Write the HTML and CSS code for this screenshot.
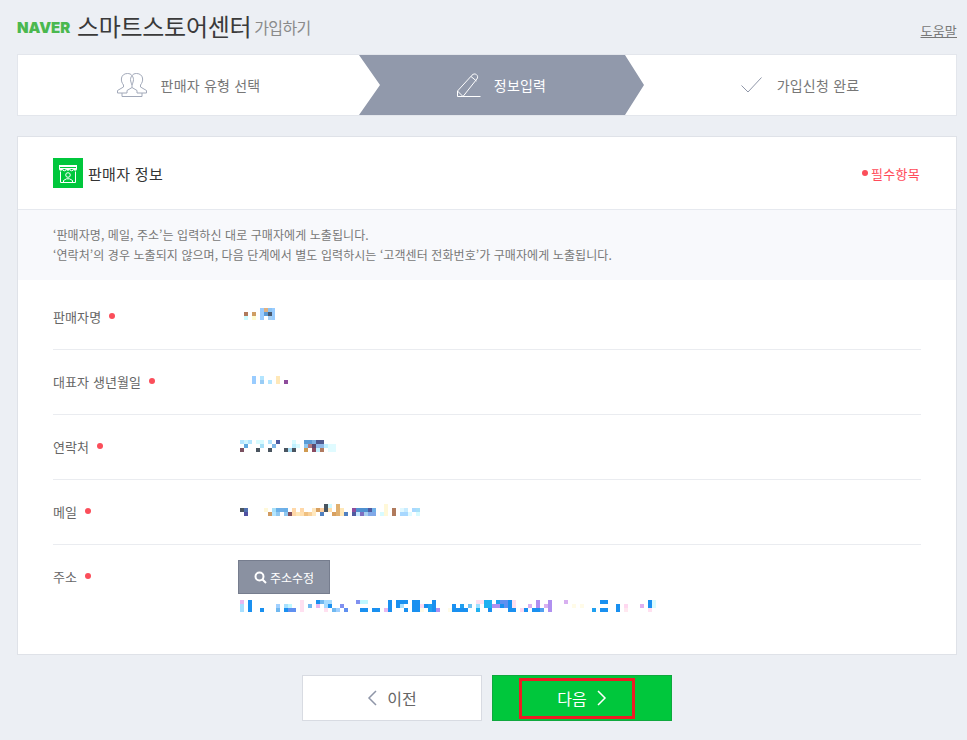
FILE: index.html
```html
<!DOCTYPE html>
<html lang="ko">
<head>
<meta charset="utf-8">
<title>스마트스토어센터 가입하기</title>
<link rel="stylesheet" href="styles.css">
</head>
<body>
<div class="page">
  <header class="top">
    <span class="naver">NAVER</span>
    <h1 class="title">스마트스토어센터</h1>
    <span class="sub">가입하기</span>
    <a class="help" href="#">도움말</a>
  </header>

  <ol class="steps">
    <li class="step step-first">
      <svg class="ico-people" width="30" height="24" viewBox="0 0 30 24" fill="none" stroke="#a2a9b9" stroke-width="1">
        <path d="M15 2.500C14 1.200 12.500.5 10.500.5 7 .5 5 2.500 4.500 5c-.5 3 .5 5 2 7v2L.5 17.500V20H5v3.500h20V20h4.500v-2.500l-6-3.500v-2c1.500-2 2.500-4 2-7C25 2.500 23 .5 19.500.5c-2 0-3.500.7-4.500 2z"/>
        <path d="M15 2.500c1.300 1.800 1.800 3.500 1.300 5.500-.3 1.500-.8 3-1.300 4-.5-1-1-2.500-1.300-4-.5-2 0-3.700 1.300-5.500zM15 12v2.500l-5 3v2.500H5M15 14.500l5 3v2.500h5"/>
      </svg>
      <span class="step-text">판매자 유형 선택</span>
    </li>
    <li class="step step-active">
      <svg class="ico-pencil" width="24" height="24" viewBox="0 0 24 24" fill="none" stroke="#fff" stroke-width="1">
        <path d="M.5 23.500v-5.500L15 2.200c1.300-1.400 3-1.700 4.400-.6 1.500 1.200 1.700 3 .4 4.500L6 23.500zM.5 18l5.500 5.500M14 3.500l5.500 4.500M6 23.500h17.500"/>
      </svg>
      <span class="step-text">정보입력</span>
    </li>
    <li class="step step-last">
      <svg class="ico-check" width="21" height="16" viewBox="0 0 21 16" fill="none" stroke="#8f96a8" stroke-width="1">
        <path d="M.5 8.500L7 15 20.500.5"/>
      </svg>
      <span class="step-text">가입신청 완료</span>
    </li>
  </ol>

  <main class="card">
    <div class="card-head">
      <span class="store-badge">
        <svg width="30" height="30" viewBox="0 0 30 30" fill="none" stroke="#fff" stroke-width="1">
          <path d="M6.500 7.500h17v3h-17z"/>
          <path fill="#fff" stroke="none" d="M6 7h18v2H6zM6 10h3.600v1a1.800 1.800 0 0 1-3.600 0zM13.200 10h3.600v1a1.800 1.800 0 0 1-3.600 0zM20.400 10H24v1a1.800 1.800 0 0 1-3.600 0z"/>
          <path d="M9.600 10.500v.5a1.800 1.800 0 0 0 3.600 0v-.5M16.800 10.500v.5a1.800 1.800 0 0 0 3.600 0v-.5"/>
          <path d="M7.500 13.500v11h15v-11"/>
          <circle cx="15" cy="17" r="2.300"/>
          <path d="M10.500 24.500v-2l3-1.700h3l3 1.700v2"/>
        </svg>
      </span>
      <h2 class="card-title">판매자 정보</h2>
      <span class="required"><i class="dot dot-tight"></i>필수항목</span>
    </div>

    <div class="notice">
      <p>‘판매자명, 메일, 주소’는 입력하신 대로 구매자에게 노출됩니다.</p>
      <p>‘연락처’의 경우 노출되지 않으며, 다음 단계에서 별도 입력하시는 ‘고객센터 전화번호’가 구매자에게 노출됩니다.</p>
    </div>

    <div class="rows">
      <div class="row row-first">
        <div class="label">판매자명<i class="dot"></i></div>
        <svg class="mosaic" width="36" height="12" viewBox="0 0 36 12" stroke-width="4" fill="none">
          <path stroke="#b07a5c" d="M4 6h4"/><path stroke="#cdfbff" d="M4 10h4"/>
          <path stroke="#cf9d62" d="M12 6h4"/><path stroke="#fffbd0" d="M12 10h4"/>
          <path stroke="#99ccff" d="M20 2h4M20 6h4M20 10h4M32 2h3M32 6h3M32 10h3"/>
          <path stroke="#e0b080" d="M24 2h4"/><path stroke="#5b9bd5" d="M24 6h4"/>
          <path stroke="#8cc4f5" d="M28 2h4"/><path stroke="#4a5a70" d="M28 6h4"/><path stroke="#a5d0f5" d="M28 10h4"/>
        </svg>
      </div>
      <div class="row row-birth">
        <div class="label">대표자 생년월일<i class="dot"></i></div>
        <svg class="mosaic" width="48" height="8" viewBox="0 0 48 8" stroke-width="4" fill="none">
          <path stroke="#99ccff" d="M12 2h4M12 6h4"/>
          <path stroke="#b3e5ff" d="M20 2h4M28 6h4"/><path stroke="#99ccf5" d="M20 6h4"/>
          <path stroke="#ffe8b8" d="M36 2h4M36 6h4"/><path stroke="#8e4c9c" d="M44 6h4"/>
        </svg>
      </div>
      <div class="row row-phone">
        <div class="label">연락처<i class="dot"></i></div>
        <svg class="mosaic" width="96" height="12" viewBox="0 0 96 12" stroke-width="4" fill="none">
          <path stroke="#b3e5ff" d="M0 2h4M8 2h4M28 2h4"/><path stroke="#d0f5ff" d="M4 2h4"/><path stroke="#d8fbff" d="M16 2h8M52 2h4M56 6h4"/>
          <path stroke="#4f5aa0" d="M36 2h4"/><path stroke="#5fa8e0" d="M4 6h4"/><path stroke="#a8e0f8" d="M20 6h4M48 10h4"/>
          <path stroke="#7fb8e8" d="M32 6h4"/><path stroke="#c0f0ff" d="M52 6h4M84 6h4M76 10h4"/>
          <path stroke="#7a5060" d="M0 10h4"/><path stroke="#4a5560" d="M16 10h4M28 10h4M44 10h4M52 10h4"/>
          <path stroke="#5b9bd5" d="M64 2h8"/><path stroke="#7cb0e0" d="M72 2h4"/><path stroke="#4f5a90" d="M76 2h8"/>
          <path stroke="#90c8f0" d="M64 6h4"/><path stroke="#b07a80" d="M68 6h4"/><path stroke="#5a4a70" d="M72 6h4"/><path stroke="#8fb8e8" d="M76 6h8"/><path stroke="#e0fbff" d="M88 6h8M88 10h8"/>
          <path stroke="#d09a50" d="M64 10h4"/><path stroke="#8a4a60" d="M72 10h4"/><path stroke="#b07a60" d="M80 10h4"/>
        </svg>
      </div>
      <div class="row">
        <div class="label">메일<i class="dot"></i></div>
        <svg class="mosaic" width="180" height="12" viewBox="0 0 180 12" stroke-width="4" fill="none">
          <path stroke="#4a5560" d="M0 6h4M84 2h4M84 6h4"/><path stroke="#5070b0" d="M4 6h4"/><path stroke="#5050a0" d="M4 10h4"/>
          <path stroke="#fff8d8" d="M24 6h4M144 2h4M144 6h4M144 10h4"/>
          <path stroke="#d09a60" d="M28 10h4"/><path stroke="#a8e0f8" d="M32 6h4M176 6h4"/><path stroke="#b3e5ff" d="M32 10h4"/>
          <path stroke="#6ab0e8" d="M36 6h4M44 6h4"/><path stroke="#70b0e8" d="M40 6h4M132 6h4"/><path stroke="#90c8f0" d="M36 10h4M44 10h4"/>
          <path stroke="#805060" d="M48 10h4"/><path stroke="#ffd8a8" d="M52 6h4M60 6h4M52 10h4"/><path stroke="#ffe8b8" d="M56 10h4M100 10h4M100 6h4"/><path stroke="#ffe0b0" d="M60 10h4M88 6h4"/>
          <path stroke="#f0c080" d="M64 10h4"/><path stroke="#f8d098" d="M68 10h4"/><path stroke="#ffe8c0" d="M72 10h4M72 6h4"/>
          <path stroke="#d8a060" d="M76 6h4M92 10h4"/><path stroke="#ffd0a0" d="M80 6h4"/><path stroke="#5080c0" d="M80 10h4M104 10h4"/>
          <path stroke="#e0b070" d="M96 2h4M96 6h4M96 10h4"/><path stroke="#d0f8ff" d="M88 2h4"/><path stroke="#8e4c9c" d="M112 6h4"/>
          <path stroke="#4f90d0" d="M116 6h12"/><path stroke="#4f5aa0" d="M128 6h4M112 10h4"/><path stroke="#c8e8ff" d="M116 10h4"/><path stroke="#7f70c0" d="M120 10h4"/><path stroke="#a8d0f0" d="M124 10h4"/><path stroke="#80a8e8" d="M128 10h4M132 10h4"/>
          <path stroke="#d8fbff" d="M140 10h4M176 10h4"/><path stroke="#b07a5c" d="M152 6h4M152 10h4"/>
          <path stroke="#e0f8ff" d="M160 6h4"/><path stroke="#c8ecff" d="M164 6h4"/><path stroke="#a8d8ff" d="M160 10h8M172 6h4"/><path stroke="#e0fbff" d="M168 10h4"/>
        </svg>
      </div>
      <div class="row row-address">
        <div class="label">주소<i class="dot"></i></div>
        <div class="address">
          <button class="btn-address" type="button">
            <svg width="13" height="13" viewBox="0 0 13 13" fill="none" stroke="#fff" stroke-width="2"><circle cx="5.500" cy="5.500" r="4"/><path d="M8.500 8.500l3.500 3.500"/></svg>
            주소수정
          </button>
          <svg class="mosaic mosaic-addr" width="416" height="12" viewBox="0 0 416 12" stroke-width="4" fill="none">
            <path stroke="#e8b8f0" d="M0 2h4M76 6h4M144 10h4"/>
            <path stroke="#a8e0ff" d="M0 6h4M0 10h4M44 6h4M160 6h4"/>
            <path stroke="#1a90f0" d="M8 2h4M8 6h4M8 10h4M20 10h4M44 10h4M76 2h4M88 6h4M120 10h8M132 10h8M148 2h4M148 6h4M148 10h4M156 2h8M156 6h4M164 2h4M164 10h4M172 2h8M172 6h8M172 10h8M184 6h4M192 2h4M192 6h4M192 10h4M212 6h4M212 10h4M216 10h12M248 10h4M260 2h4M260 6h4M268 2h8M268 6h8M268 10h8M280 10h8M292 10h8M360 2h8M360 10h8M376 6h4M376 10h4M408 2h4M408 6h4"/>
            <path stroke="#70b8f0" d="M36 10h4M68 6h4M80 2h4M92 10h4"/>
            <path stroke="#a0d0ff" d="M36 6h4M96 10h4"/>
            <path stroke="#c0f8ff" d="M48 6h4M120 2h8"/>
            <path stroke="#6090f0" d="M48 10h8M104 10h4M260 2h8M264 6h4"/>
            <path stroke="#ffe0f0" d="M60 2h4M60 6h4M60 10h4M84 10h4M236 2h8M272 2h4M272 6h4M408 10h4"/>
            <path stroke="#a8dcff" d="M84 2h4M84 6h4M88 2h4"/>
            <path stroke="#8090f0" d="M100 6h4M116 2h4"/>
            <path stroke="#b090f0" d="M196 10h4M252 6h8M296 2h4M308 2h4M308 6h4M308 10h4M296 6h4"/>
            <path stroke="#20a0f0" d="M188 6h4M188 10h4M220 6h4M256 2h4M352 10h4"/>
            <path stroke="#70c0f0" d="M228 6h4"/>
            <path stroke="#20b0f0" d="M236 10h4M244 2h8M244 6h8"/>
            <path stroke="#a0e0ff" d="M236 6h4"/>
            <path stroke="#d8b0f0" d="M288 6h4M324 2h4M304 6h4"/>
            <path stroke="#50a0f0" d="M300 10h4"/>
            <path stroke="#ffd8f0" d="M180 6h4M280 10h4M384 6h4"/>
            <path stroke="#e0b0f0" d="M400 6h4"/>
            <path stroke="#ffe8f0" d="M384 10h4"/>
            <path stroke="#fffbe8" d="M180 10h4M208 10h4M332 6h4M340 6h4"/>
            <path stroke="#d8fbff" d="M412 2h4M412 6h4"/>
          </svg>
        </div>
      </div>
    </div>
  </main>

  <nav class="actions">
    <button class="btn btn-prev" type="button">
      <svg width="10" height="16" viewBox="0 0 10 16" fill="none" stroke="#8f96a8" stroke-width="1.500"><path d="M9 1L2 8l7 7"/></svg>
      이전
    </button>
    <button class="btn btn-next" type="button">
      다음
      <svg width="10" height="16" viewBox="0 0 10 16" fill="none" stroke="#fff" stroke-width="1.500"><path d="M1 1l7 7-7 7"/></svg>
      <span class="highlight"></span>
    </button>
  </nav>
</div>
</body>
</html>
```

FILE: styles.css
```css
* { box-sizing: border-box; }
html, body { margin: 0; padding: 0; }
body {
  background: #eceff4;
  font-family: "Noto Sans CJK KR", "Noto Sans", sans-serif;
  color: #666;
  overflow: hidden;
}
.page { width: 940px; margin-left: 17px; }
p, h1, h2, ol { margin: 0; padding: 0; }

.top { display: flex; align-items: center; height: 54px; }
.naver {
  font-family: Inter, "Liberation Sans", sans-serif;
  font-weight: 900;
  font-size: 15px;
  color: #4ab84f;
  width: 60px;
}
.title { font-size: 24px; font-weight: 400; color: #3a3a3a; letter-spacing: -.3px; line-height: 52px; height: 54px; }
.sub { font-size: 16px; color: #8a8a8a; margin-left: 3px; letter-spacing: -.6px; }
.help { margin-left: auto; margin-top: 6px; font-size: 13px; letter-spacing: .2px; color: #777; }

.steps {
  display: flex;
  height: 62px;
  list-style: none;
  background: #fff;
  border: 1px solid #e3e6ec;
}
.step { display: flex; align-items: center; justify-content: center; font-size: 14px; letter-spacing: .2px; color: #777; }
.step-first { width: 341px; }
.step-active {
  width: 285px;
  background: #9199ab;
  color: #fff;
  clip-path: polygon(0 0, 266px 0, 285px 30px, 266px 60px, 0 60px, 21px 30px);
}
.step-last { flex: 1; }
.ico-people { margin-right: 14px; }
.ico-pencil { margin-right: 13px; }
.ico-check { margin-right: 15px; }

.card {
  margin-top: 20px;
  height: 519px;
  background: #fff;
  border: 1px solid #dfe2e8;
}
.card-head {
  display: flex;
  align-items: center;
  height: 73px;
  padding: 0 36px 0 35px;
  border-bottom: 1px solid #e6e9ef;
}
.store-badge { width: 30px; height: 30px; background: #00c73c; display: block; }
.store-badge svg { display: block; }
.card-title { font-size: 15px; font-weight: 400; letter-spacing: .3px; color: #333; margin-left: 5px; }
.required { margin-left: auto; font-size: 13px; letter-spacing: .3px; color: #ff4b5a; display: flex; align-items: center; }

.dot { display: inline-block; width: 6px; height: 6px; border-radius: 50%; background: #fb4e5a; margin-left: 8px; }
.dot-tight { margin: 0 3px 0 0; }

.notice {
  height: 70px;
  padding: 15px 35px;
  background: #f8f9fc;
  font-size: 12px;
  letter-spacing: .08px;
  line-height: 20px;
  color: #777;
}
.rows { padding: 0 35px; }
.row {
  display: flex;
  height: 65px;
  border-bottom: 1px solid #eaecf0;
}
.row-first { height: 70px; }
.row-address { border-bottom: 0; height: auto; padding-top: 15px; }
.label { width: 187px; font-size: 13px; letter-spacing: .1px; color: #666; display: flex; align-items: center; height: 34px; margin-top: 14px; }
.row-first .label { margin-top: 19px; }
.row-address .label { margin-top: -1px; }
.mosaic { display: block; margin-top: 24px; }
.row-first .mosaic { margin-top: 28px; }
.row-birth .mosaic { margin-top: 26px; }
.row-phone .mosaic { margin-top: 25px; }
.row .mosaic-addr { margin-top: 6px; margin-left: 2px; }
.address { margin-left: -2px; }

.btn-address {
  display: flex;
  align-items: center;
  justify-content: center;
  gap: 3px;
  width: 92px;
  height: 34px;
  padding: 0;
  background: #8a91a1;
  border: 1px solid #767d8e;
  color: #fff;
  font: inherit;
  font-size: 12px;
}

.actions { display: flex; justify-content: center; gap: 10px; margin-top: 20px; }
.btn {
  position: relative;
  display: flex;
  align-items: center;
  justify-content: center;
  gap: 10px;
  width: 180px;
  height: 46px;
  padding: 0;
  font: inherit;
  font-size: 16px;
}
.btn-prev { background: #fff; border: 1px solid #d8dbe2; color: #666; }
.btn-next { background: #00c73c; border: 1px solid #0fa83e; color: #fff; }
.highlight {
  position: absolute;
  left: 26px;
  top: 2px;
  width: 116px;
  height: 41px;
  border: 3px solid #ed1c24;
}
```
